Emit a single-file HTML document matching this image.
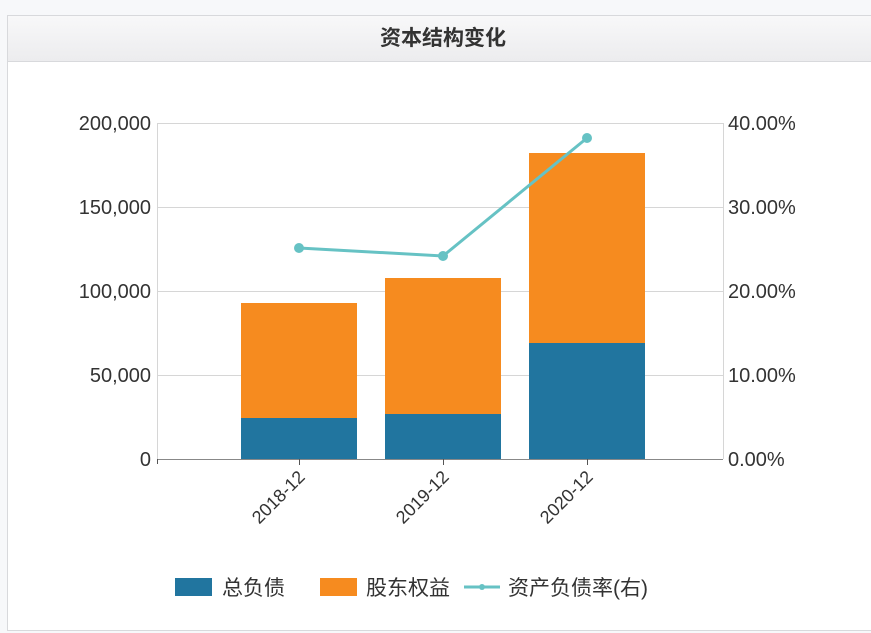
<!DOCTYPE html>
<html><head><meta charset="utf-8"><style>
body{margin:0;width:871px;height:633px;background:#f7f8fa;overflow:hidden;font-family:"Liberation Sans","Noto Sans CJK SC",sans-serif}
.p{position:absolute;left:7px;top:15px;width:870px;height:614px;border:1px solid #d8d9dc;background:#fff}
.h{height:45px;border-bottom:1px solid #d8d9dc;background:linear-gradient(#f8f8f9,#ececee);text-align:center;line-height:46px;font-size:21px;font-weight:bold;color:#333}
</style></head><body>
<div class="p"><div class="h">资本结构变化</div></div>
<svg width="871" height="633" style="position:absolute;left:0;top:0" font-family="Liberation Sans, Noto Sans CJK SC, sans-serif">
<g stroke="#d6d6d6" stroke-width="1">
<line x1="157" y1="123.5" x2="723" y2="123.5"/><line x1="157" y1="207.5" x2="723" y2="207.5"/><line x1="157" y1="291.5" x2="723" y2="291.5"/><line x1="157" y1="375.5" x2="723" y2="375.5"/>
<line x1="157.5" y1="123" x2="157.5" y2="459"/><line x1="723.5" y1="123" x2="723.5" y2="459"/>
</g>
<rect x="241" y="303" width="116" height="115" fill="#f68b1f"/><rect x="241" y="418" width="116" height="41" fill="#21759f"/>
<rect x="385" y="278" width="116" height="136" fill="#f68b1f"/><rect x="385" y="414" width="116" height="45" fill="#21759f"/>
<rect x="529" y="153" width="116" height="190" fill="#f68b1f"/><rect x="529" y="343" width="116" height="116" fill="#21759f"/>
<line x1="157" y1="459.5" x2="723" y2="459.5" stroke="#888"/>
<g stroke="#555"><line x1="157.5" y1="459" x2="157.5" y2="464"/><line x1="299.5" y1="459" x2="299.5" y2="465"/><line x1="443.5" y1="459" x2="443.5" y2="465"/><line x1="587.5" y1="459" x2="587.5" y2="465"/></g>
<polyline points="299,248 443,256 587,138" fill="none" stroke="#66c2c4" stroke-width="3"/>
<g fill="#66c2c4"><circle cx="299" cy="248" r="5"/><circle cx="443" cy="256" r="5"/><circle cx="587" cy="138" r="5"/></g>
<g font-size="20" fill="#333" text-anchor="end">
<text x="151" y="130">200,000</text><text x="151" y="214">150,000</text><text x="151" y="298">100,000</text><text x="151" y="382">50,000</text><text x="151" y="466">0</text></g>
<g font-size="20" fill="#333"><text x="728" y="130">40.00%</text><text x="728" y="214">30.00%</text><text x="728" y="298">20.00%</text><text x="728" y="382">10.00%</text><text x="728" y="466">0.00%</text></g>
<g font-size="18" fill="#333" text-anchor="end">
<text transform="translate(306,478) rotate(-45)">2018-12</text><text transform="translate(450,478) rotate(-45)">2019-12</text><text transform="translate(594,478) rotate(-45)">2020-12</text></g>
<rect x="175" y="578" width="37" height="18" fill="#21759f"/>
<rect x="320" y="578" width="37" height="18" fill="#f68b1f"/>
<line x1="464" y1="587" x2="500" y2="587" stroke="#66c2c4" stroke-width="3"/><circle cx="482" cy="587" r="3" fill="#66c2c4"/>
<g font-size="21" fill="#333"><text x="222" y="595">总负债</text><text x="366" y="595">股东权益</text><text x="508" y="595">资产负债率(右)</text></g>
</svg>
</body></html>
